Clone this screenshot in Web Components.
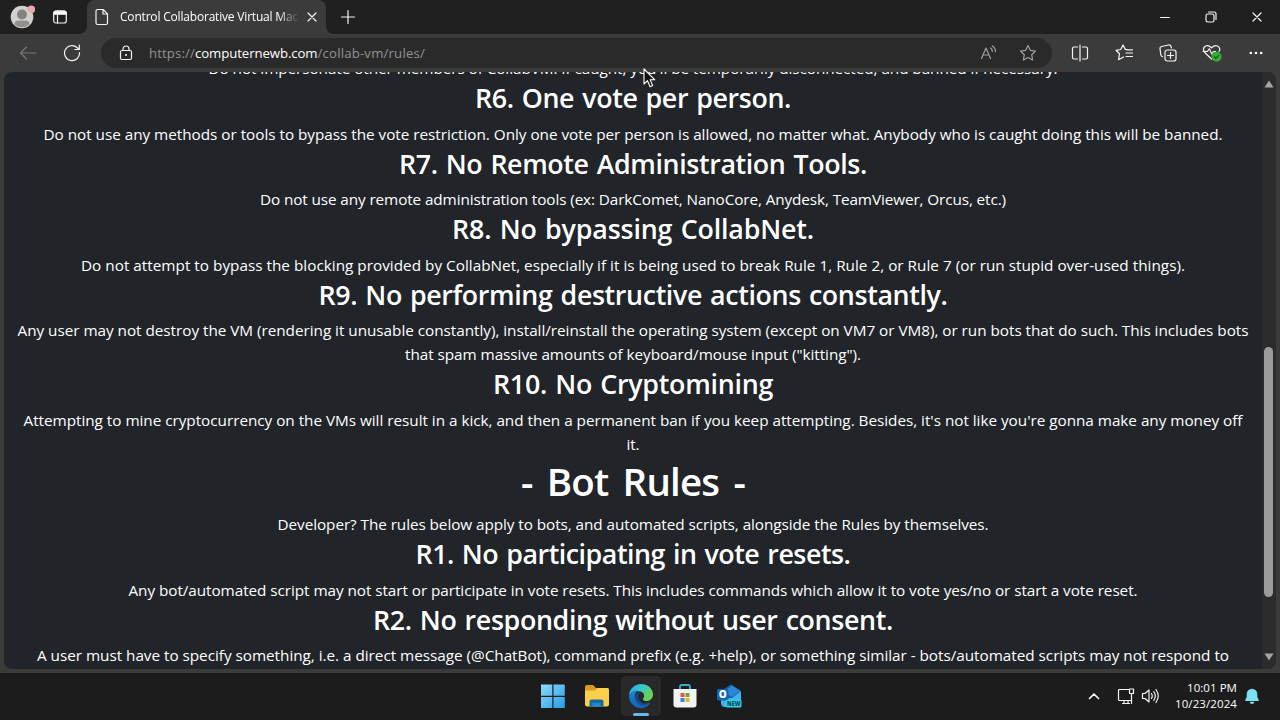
<!DOCTYPE html>
<html lang="en">
<head>
<meta charset="utf-8">
<title>Control Collaborative Virtual Machines</title>
<style>
html,body{margin:0;height:100%;overflow:hidden;background:#1c1c1c}
body{font-family:"Open Sans","Noto Sans",sans-serif;color:#fff}
</style>
</head>
<body>
<desktop-shell></desktop-shell>
<script>
function define(name, html, connected) {
  customElements.define(name, class extends HTMLElement {
    constructor() {
      super();
      this.attachShadow({mode: 'open'}).innerHTML = html;
    }
    connectedCallback() { if (connected) connected.call(this); }
  });
}

/* A single line whose tracking is tuned to fill the width in its "w" attribute. */
define('fit-line', `<style>
:host{display:block;white-space:nowrap}
span{display:inline-block;white-space:nowrap}
</style><span><slot></slot></span>`, function () {
  const w = parseFloat(this.getAttribute('w'));
  const s = this.shadowRoot.querySelector('span');
  const n = this.textContent.length;
  s.style.letterSpacing = '0px';
  const d = (w - s.getBoundingClientRect().width) / n;
  s.style.letterSpacing = d.toFixed(4) + 'px';
});

const icons = {
  avatar: [26, '<circle cx="13" cy="13" r="11.3" fill="#d2d0cd" stroke="none"/><circle cx="13" cy="10.5" r="5" fill="#858280" stroke="none"/><path d="M5.5 20.5q0-4 4-4h7q4 0 4 4a11.5 11.5 0 0 1-15 0z" fill="#92908d" stroke="none"/><circle cx="22.300" cy="5.300" r="3.800" fill="#e7a9b0" stroke="none"/>'],
  workspace: [16, '<rect x="1.700" y="2" width="12.600" height="12" rx="2.200"/><path d="M2 3.800q0-1.600 2-1.600h8q2 0 2 1.600v1.400H2z" fill="#fff"/><path d="M5.500 5v9"/>'],
  file: [18, '<path d="M4.500 1.500h5.700l4.300 4.300V15q0 1.500-1.500 1.500H4.500Q3 16.500 3 15V3q0-1.500 1.500-1.500zM10 1.700V6h4.300"/>'],
  close: [10, '<path d="M1 1l8 8M9 1L1 9"/>'],
  plus: [14, '<path d="M7 .6v12.800M.6 7h12.800"/>'],
  min: [10, '<path d="M.6 5.500h8.800"/>'],
  restore: [12, '<rect x="1" y="3" width="8" height="8" rx="1.800"/><path d="M3.500 1H9q2 0 2 2v5.500"/>'],
  back: [18, '<path d="M17 9H1.500M7.500 3L1.500 9l6 6"/>'],
  reload: [18, '<path d="M16.500 8.500A7.500 7.500 0 1 1 14 3.500l2 1.800M16.300 1v4.500h-4.500"/>'],
  lock: [16, '<rect x="2.500" y="5.500" width="11" height="9" rx="1.500"/><path d="M5 5.500V4a3 3 0 0 1 6 0v1.500"/><circle cx="8" cy="10" r="1" fill="#fff" stroke="none"/>'],
  read: [18, '<path d="M2.500 14.500L7 4l4.500 10.500M4 11h6M11.500 4q2 1 1.800 3.500M13.200 2q3.500 1.700 3.200 5.700"/>'],
  star: [18, '<path d="M9 1.500l2.300 4.800 5.200.7-3.800 3.700.9 5.300L9 13.500 4.400 16l.9-5.300L1.500 7l5.200-.7z"/>'],
  split: [18, '<path d="M6.500 3H3Q1.500 3 1.500 4.500v9Q1.500 15 3 15h3.500M11.500 3H15q1.500 0 1.500 1.500v9q0 1.500-1.500 1.500h-3.500M9 1v16"/>'],
  favs: [18, '<path d="M14.500 6l-4.200-.6L8 1 5.700 5.500 1 6.300l3.500 3.400-.9 6L8.500 13M11 9h6.500M11 12.500h6.500M12 5.800h5.500"/>'],
  collections: [18, '<rect x="6" y="6" width="11" height="11" rx="2.200"/><path d="M11.500 8.500v6M8.500 11.500h6M3.500 12.700Q2 12 1.700 10.300L1 4.500Q.8 3 2.500 2.500L9.500 1q2-.3 2.500 1.300l.4 1.600"/>'],
  health: [20, '<path d="M9.500 16L3 9.800Q.3 6.500 2.400 4q3-3 7.100.8Q13.600 1 16.800 4q1.800 2.300.2 4.500M1 8.500h4.300l2-2.700 2.500 5.200 1.700-2.500h2"/><circle cx="14.500" cy="13.700" r="5" fill="#35ad39" stroke="none"/><path d="M12.300 13.800l1.500 1.500 3-3" stroke="#17511b"/>'],
  more: [16, '<g fill="#fff" stroke="none"><circle cx="2.800" cy="8" r="1.300"/><circle cx="8" cy="8" r="1.300"/><circle cx="13.200" cy="8" r="1.300"/></g>'],
  windows: [24, '<defs><linearGradient id="g" x2="1" y2="1"><stop stop-color="#8ddcfb"/><stop offset="1" stop-color="#259ce4"/></linearGradient></defs><path d="M0 .5h11.300v11.300H0zM12.500.5h11.300v11.300H12.500zM0 13h11.300v11H0zM12.500 13h11.300v11H12.500z" fill="url(#g)" stroke="none"/>'],
  folder: [26, '<g stroke="none"><path d="M1 4q0-2 2-2h6l3 3h11q2 0 2 2v5H1z" fill="#d89b20"/><path d="M1 7.500h10l2.500-2.500H23q2 0 2 2v14.500q0 2-2 2H3q-2 0-2-2z" fill="#fbce4b"/><path d="M5.500 23.500v-5q0-2 2-2h10q2 0 2 2v5z" fill="#1769aa"/><path d="M8.500 20h8v3.500h-8z" fill="#2b87c9"/></g>'],
  edge: [26, '<defs><linearGradient id="a" x1="0" y1="0" x2="1" y2=".45"><stop stop-color="#2aa5df"/><stop offset=".5" stop-color="#36c5cf"/><stop offset="1" stop-color="#6bd34e"/></linearGradient><linearGradient id="b" x2="0" y2="1"><stop stop-color="#1688d1"/><stop offset="1" stop-color="#1462b6"/></linearGradient></defs><g stroke="none"><path d="M1 13C1 6 6.500 1 13 1c7 0 12 4.800 12 10.500 0 4-3 6.500-6.500 6.500-3 0-4.300-1.500-3-3 1.500-2 .5-6-3.500-6.500C7 7.700 2 9.500 1 13z" fill="url(#a)"/><path d="M1 13c1-4 5-6 9-5.500C6.500 9.500 6 14 8 17.500c2.500 4 8 5 12.500 2.500 1-.5 1.800.1 1 1-3.500 4.500-10 5.500-15 2.200Q1 19.500 1 13z" fill="url(#b)"/><path d="M10 9.500C6 12 6.500 19 11.500 21.500c4 2 8 .5 10-1.500-5 1.800-10-.5-11.300-4.500-.7-2.500.3-4.600 1.600-5.800z" fill="#164a91"/></g>'],
  store: [26, '<g stroke="none"><path d="M8 7V3.500Q8 2 9.500 2h7Q18 2 18 3.500V7" fill="none" stroke="#35afc7" stroke-width="1.800"/><path d="M1.500 6h23v15.500q0 3-3 3h-17q-3 0-3-3z" fill="#f1f3f5"/><path d="M8.500 10h4v4h-4z" fill="#ef513f"/><path d="M13.500 10h4v4h-4z" fill="#6aaa3b"/><path d="M8.500 15h4v4h-4z" fill="#268dd2"/><path d="M13.500 15h4v4h-4z" fill="#f1b51c"/></g>'],
  chevron: [12, '<path d="M1.500 8.500L6 4l4.500 4.500" stroke-width="1.700"/>'],
  network: [18, '<path d="M11.500 2.500H2.500Q1.500 2.500 1.500 3.500v9q0 1 1 1H14.500M5.500 16.500h7M7 13.500v3M11 13.500v3M12.500 2h4v4.500h-4zM14.500 6.500v10"/>'],
  sound: [18, '<path d="M1.500 6.500H4L8 3v12l-4-3.500H1.500zM10.500 6.500q1.500 2.500 0 5M12.800 4.500q3 4.500 0 9M15 2.500q4.500 6.500 0 13"/>'],
  bell: [16, '<path d="M8 .8a5.300 5.300 0 0 0-5.300 5.300v3L1.200 12q-.3.900.6.900h12.400q.9 0 .6-.9l-1.500-2.900v-3A5.300 5.300 0 0 0 8 .8zM5.800 13.700h4.400a2.200 2.200 0 0 1-4.400 0z" fill="#7be0f0" stroke="none"/>'],
  cursor: [20, '<path d="M1 1v15l3.500-3.300 2.600 6 2.600-1.100-2.600-5.800h4.700z" fill="#111" stroke="#fff" stroke-width="1.100"/>'],
  up: [10, '<path d="M5 1.500L9.500 8.500h-9z" fill="#a3a5a6" stroke="none"/>'],
  down: [10, '<path d="M5 8.500L9.500 1.500h-9z" fill="#a3a5a6" stroke="none"/>']
};
define('ui-icon', `<style>
:host{display:inline-flex;flex:none;color:#f4f4f4}
svg{display:block;fill:none;stroke:currentColor;stroke-width:1.2;stroke-linecap:round;stroke-linejoin:round}
</style><svg></svg>`, function () {
  const [n, body] = icons[this.getAttribute('name')];
  const svg = this.shadowRoot.querySelector('svg');
  const size = this.getAttribute('size') || n;
  svg.setAttribute('viewBox', `0 0 ${n} ${n}`);
  svg.setAttribute('width', size);
  svg.setAttribute('height', size);
  svg.innerHTML = body;
});

define('outlook-icon', `<style>
:host{display:inline-flex}svg{display:block}
text{font:800 6px "Open Sans",sans-serif;fill:#0a4a6e}
.o{font-size:10px;fill:#fff}
</style><svg width="26" height="26" viewBox="0 0 26 26">
<path d="M5 8L15 1.500 25 8v14q0 2-2 2H8q-3 0-3-3z" fill="#1761ae"/>
<path d="M9 8l7-5.500 8.500 5.500-9 6z" fill="#2b86d6"/><path d="M5 15l11 0 9-7v14l-2 2H8l-3-3z" fill="#3fb4ec"/>
<rect x="1" y="6" width="11.500" height="11.500" rx="1.500" fill="#1265b8"/><text class="o" x="2.800" y="15.400">O</text>
<rect x="10" y="16.500" width="15.500" height="8" rx="1.500" fill="#33d0dd"/><text x="11" y="22.700" textLength="13.500" lengthAdjust="spacingAndGlyphs">NEW</text></svg>`);

define('tab-strip', `<style>
:host{display:flex;height:34px;background:#202020;align-items:center;box-sizing:border-box;padding-left:9px}
.ws{margin-left:17px;margin-right:19px}
.tab{width:239px;height:34px;background:#3b3b3b;border-radius:8px 8px 0 0;display:flex;align-items:center;box-sizing:border-box;padding:0 9px 0 6px;position:relative}
.tab::before,.tab::after{content:"";position:absolute;bottom:0;width:7px;height:7px}
.tab::before{left:-7px;background:radial-gradient(circle at 0 0,#202020 6.500px,#3b3b3b 7px)}
.tab::after{right:-7px;background:radial-gradient(circle at 100% 0,#202020 6.500px,#3b3b3b 7px)}
.title{width:178px;margin-left:9px;overflow:hidden;font-size:12px;line-height:20px;-webkit-mask-image:linear-gradient(90deg,#000 158px,transparent 179px)}
.new{margin-left:15px}
.win{margin-left:auto;display:flex;align-items:center;gap:35px;padding-right:18px}
</style>
<ui-icon name="avatar"></ui-icon><ui-icon class="ws" name="workspace"></ui-icon>
<div class="tab"><ui-icon name="file"></ui-icon><div class="title"><fit-line w="178">Control Collaborative Virtual Mac</fit-line></div><ui-icon name="close" style="margin-left:9px"></ui-icon></div>
<ui-icon class="new" name="plus"></ui-icon>
<div class="win"><ui-icon name="min"></ui-icon><ui-icon name="restore"></ui-icon><ui-icon name="close"></ui-icon></div>`);

define('address-bar', `<style>
:host{display:flex;align-items:center;height:38px;background:#3b3b3b;box-sizing:border-box;padding:0 16px 0 19px}
.field{display:flex;align-items:center;box-sizing:border-box;margin-left:20px;width:951px;height:30px;border-radius:15px;background:#2a2a2a;padding:0 15px 0 17px}
.url{display:flex;margin-left:15px;font-size:13.200px;line-height:20px;color:#929292}
.host{color:#fff}
.dim{color:#a0a0a0}.right{display:flex;gap:22px;margin-left:auto;align-items:center}
.tools{display:flex;flex:1;justify-content:space-between;align-items:center;margin-left:19px}
</style>
<ui-icon name="back" style="color:#777"></ui-icon><ui-icon name="reload" style="margin-left:26px"></ui-icon>
<div class="field"><ui-icon name="lock"></ui-icon><div class="url"><fit-line w="46">https://</fit-line><fit-line class="host" w="122.500">computernewb.com</fit-line><fit-line w="107.500">/collab-vm/rules/</fit-line></div>
<div class="right"><ui-icon class="dim" name="read"></ui-icon><ui-icon class="dim" name="star"></ui-icon></div></div>
<div class="tools"><ui-icon name="split"></ui-icon><ui-icon name="favs"></ui-icon><ui-icon name="collections"></ui-icon><ui-icon name="health"></ui-icon><ui-icon name="more"></ui-icon></div>`);

define('rule-entry', `<style>
:host{display:flex;flex-direction:column;align-items:center;font-size:15.300px;line-height:24px}
::slotted([slot=title]){font-size:26.800px;font-weight:600;line-height:33.600px;padding-top:1px;margin-bottom:7px;word-spacing:1.500px}
::slotted([slot=title].big){font-size:38.500px;line-height:48px;word-spacing:5px}
</style><slot name="title"></slot><slot></slot>`);

define('page-scrollbar', `<style>
:host{display:flex;flex-direction:column;align-items:center;box-sizing:border-box;width:14px;padding:7px 1px 7px 0;background:#2c2c2c}
.thumb{width:9px;height:250px;border-radius:5px;background:#9b9d9d;margin-top:258px}
ui-icon:last-child{margin-top:auto}
</style><ui-icon name="up"></ui-icon><div class="thumb"></div><ui-icon name="down"></ui-icon>`);

const rules = [
  [null, [["Do not impersonate other members of CollabVM. If caught, you'll be temporarily disconnected, and banned if necessary.", 849]]],
  [['R6. One vote per person.', 316], [['Do not use any methods or tools to bypass the vote restriction. Only one vote per person is allowed, no matter what. Anybody who is caught doing this will be banned.', 1179]]],
  [['R7. No Remote Administration Tools.', 468], [['Do not use any remote administration tools (ex: DarkComet, NanoCore, Anydesk, TeamViewer, Orcus, etc.)', 746]]],
  [['R8. No bypassing CollabNet.', 362], [['Do not attempt to bypass the blocking provided by CollabNet, especially if it is being used to break Rule 1, Rule 2, or Rule 7 (or run stupid over-used things).', 1104]]],
  [['R9. No performing destructive actions constantly.', 629], [['Any user may not destroy the VM (rendering it unusable constantly), install/reinstall the operating system (except on VM7 or VM8), or run bots that do such. This includes bots', 1231], ['that spam massive amounts of keyboard/mouse input ("kitting").', 456]]],
  [['R10. No Cryptomining', 280], [["Attempting to mine cryptocurrency on the VMs will result in a kick, and then a permanent ban if you keep attempting. Besides, it's not like you're gonna make any money off", 1219], ['it.', 13]]],
  [['- Bot Rules -', 224, 'big'], [['Developer? The rules below apply to bots, and automated scripts, alongside the Rules by themselves.', 711]]],
  [['R1. No participating in vote resets.', 435], [['Any bot/automated script may not start or participate in vote resets. This includes commands which allow it to vote yes/no or start a vote reset.', 1009]]],
  [['R2. No responding without user consent.', 520], [['A user must have to specify something, i.e. a direct message (@ChatBot), command prefix (e.g. +help), or something similar - bots/automated scripts may not respond to', 1192]]]
];
const line = (t, extra = '') => `<fit-line ${extra} w="${t[1]}">${t[0]}</fit-line>`;
define('rules-page', `<style>
:host{display:flex;height:601px;background:#3b3b3b;box-sizing:border-box;padding:0 4px 4px 4px}
.view{display:flex;flex:1;background:#212529;border-radius:8px;overflow:hidden}
main{flex:1;min-width:0;margin-top:-16px}
</style><div class="view"><main>${rules.map(([h, b]) =>
  `<rule-entry>${h ? line(h, `slot="title" class="${h[2] || ''}"`) : ''}${b.map(t => line(t)).join('')}</rule-entry>`).join('')}</main><page-scrollbar></page-scrollbar></div>`);

define('task-bar', `<style>
:host{display:flex;height:47px;background:#1c1c1c;align-items:center;box-sizing:border-box;padding-bottom:1px}
.apps{display:flex;align-items:center;padding-left:533px;gap:4px}
.app{width:40px;height:40px;display:flex;align-items:center;justify-content:center;border-radius:4px;position:relative}
.active{background:#292929}
.active::after{content:"";position:absolute;bottom:0;left:12px;width:16px;height:3px;border-radius:2px;background:#69b8eb}
.tray{margin-left:auto;display:flex;align-items:center;padding-right:20px}
.clock{display:flex;flex-direction:column;align-items:flex-end;font-size:11.500px;line-height:16px;margin:0 7px 0 16px}
</style>
<div class="apps"><div class="app"><ui-icon name="windows"></ui-icon></div><div class="app"><ui-icon name="folder"></ui-icon></div><div class="app active"><ui-icon name="edge"></ui-icon></div><div class="app"><ui-icon name="store"></ui-icon></div><div class="app"><outlook-icon></outlook-icon></div></div>
<div class="tray"><ui-icon name="chevron"></ui-icon><ui-icon name="network" style="margin-left:17px"></ui-icon><ui-icon name="sound" style="margin-left:6px"></ui-icon>
<div class="clock"><fit-line w="50">10:01 PM</fit-line><fit-line w="62">10/23/2024</fit-line></div><ui-icon name="bell"></ui-icon></div>`);

define('desktop-shell', `<style>
:host{display:flex;flex-direction:column;width:1280px;height:720px;position:relative;overflow:hidden}
.cursor{position:absolute;left:643px;top:68px}
</style><tab-strip></tab-strip><address-bar></address-bar><rules-page></rules-page><task-bar></task-bar><ui-icon class="cursor" name="cursor"></ui-icon>`);
</script>
</body>
</html>
